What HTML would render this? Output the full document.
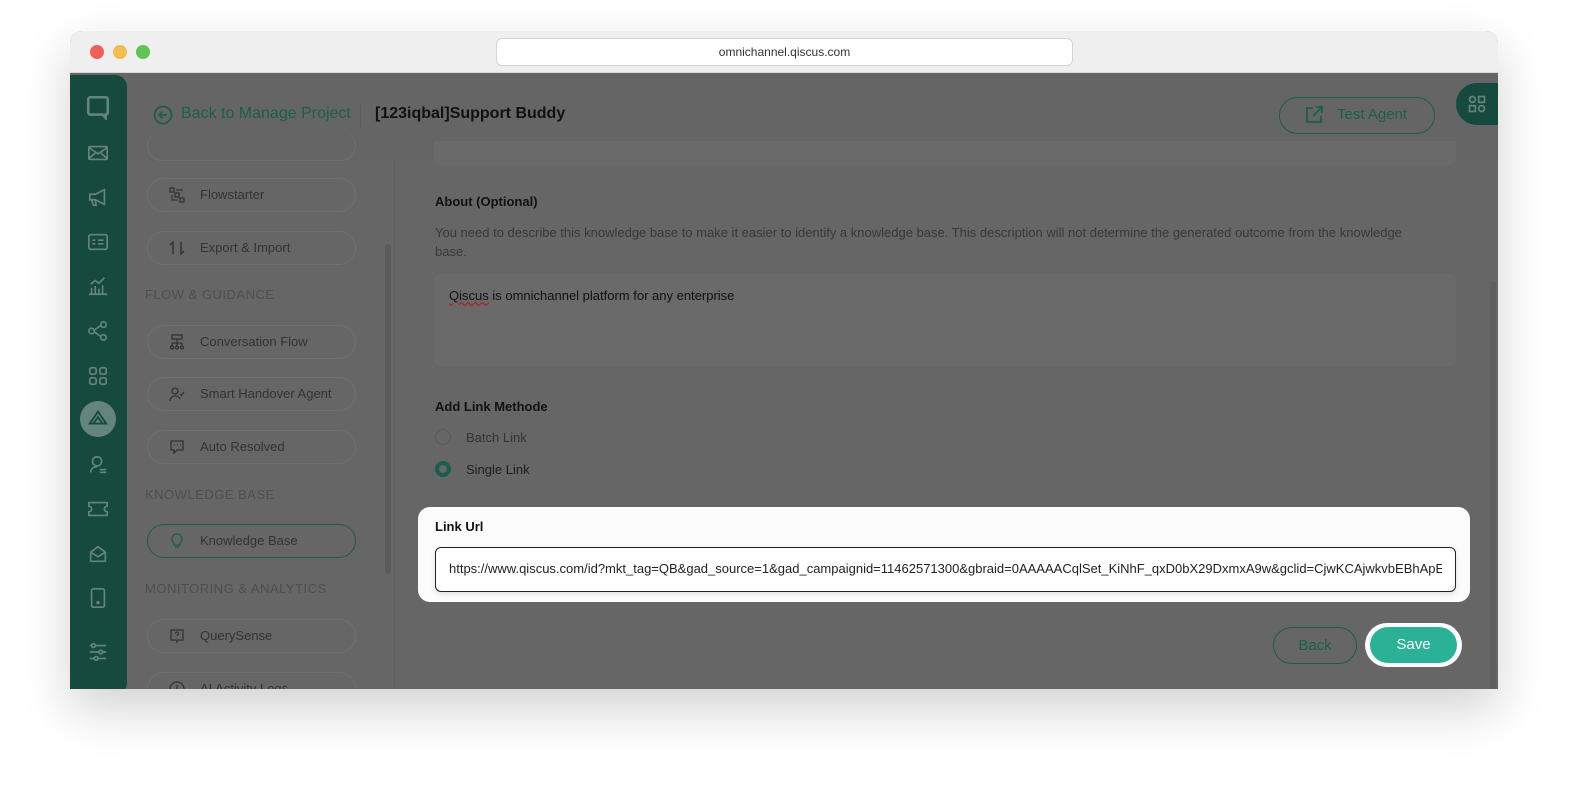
<!DOCTYPE html>
<html><head><style>
*{box-sizing:border-box;margin:0;padding:0}
body{width:1580px;height:804px;background:#fff;font-family:"Liberation Sans",sans-serif;position:relative;overflow:hidden}
.win{position:absolute;left:70px;top:31px;width:1428px;height:658px;border-radius:12px 12px 0 0;overflow:hidden;box-shadow:0 20px 50px rgba(0,0,0,.18);background:#666}
.tb{position:absolute;left:0;top:0;width:100%;height:42px;background:#efefef;border-bottom:1px solid #d8d8d8}
.dot{position:absolute;top:14px;width:14px;height:14px;border-radius:50%}
.url{position:absolute;left:426px;top:7px;width:577px;height:28px;background:#fff;border:1px solid #d6d6d6;border-radius:6px;text-align:center;font-size:12px;line-height:26px;color:#333}
.side{position:absolute;left:0;top:44px;width:57px;height:620px;background:#164a3e;border-radius:0 12px 12px 0}
.ic{position:absolute;left:17px;width:22px;height:22px}
.a{position:absolute;white-space:nowrap}
.nav{position:absolute;left:77px;width:209px;height:34px;border:1px solid #707070;border-radius:17px;color:#333;font-size:13px;line-height:32px;padding-left:52px}
.nav svg{position:absolute;left:21px;top:8px}
.sec{position:absolute;left:75px;font-size:13px;color:#4e4e4e;letter-spacing:.5px}
</style></head><body>
<div class="win">
<div class="tb">
<div class="dot" style="left:20px;background:#ee5f57"></div>
<div class="dot" style="left:43px;background:#f4bd4f"></div>
<div class="dot" style="left:66px;background:#5fc453"></div>
<div class="url">omnichannel.qiscus.com</div>
</div>
<div class="a" style="left:57px;top:43px;width:1371px;height:86px;background:#656565"></div>
<div class="side">
<svg class="ic" style="top:19px;width:26px;height:26px;left:15px" viewBox="0 0 24 24" fill="none" stroke="#65857c" stroke-width="2.4"><path d="M5 3h14a2 2 0 0 1 2 2v12a2 2 0 0 1-2 2h-0v3l-3-3H5a2 2 0 0 1-2-2V5a2 2 0 0 1 2-2z"/></svg>
<svg class="ic" style="top:67px" viewBox="0 0 24 24" fill="none" stroke="#65857c" stroke-width="1.8"><rect x="2" y="5" width="20" height="14" rx="1"/><path d="M2 6l10 7 10-7M2 18l7-6M22 18l-7-6"/></svg>
<svg class="ic" style="top:111px" viewBox="0 0 24 24" fill="none" stroke="#65857c" stroke-width="1.8"><path d="M3 9h6l10-5v16L9 15H3zM5 15l2 6h3l-1-6"/></svg>
<svg class="ic" style="top:156px" viewBox="0 0 24 24" fill="none" stroke="#65857c" stroke-width="1.8"><rect x="2" y="4" width="20" height="16" rx="2"/><path d="M6 10h3M12 10h6M6 14h3M12 14h6"/></svg>
<svg class="ic" style="top:200px" viewBox="0 0 24 24" fill="none" stroke="#65857c" stroke-width="1.8"><path d="M2 21h20M5 21v-7M9 21v-9M13 21v-6M17 21v-10M4 10l5-4 4 3 6-6"/></svg>
<svg class="ic" style="top:245px" viewBox="0 0 24 24" fill="none" stroke="#65857c" stroke-width="1.8"><circle cx="5" cy="12" r="3"/><circle cx="18" cy="5" r="3"/><circle cx="18" cy="19" r="3"/><path d="M8 11l7-5M8 13l7 5"/></svg>
<svg class="ic" style="top:290px" viewBox="0 0 24 24" fill="none" stroke="#65857c" stroke-width="1.8"><rect x="3" y="3" width="7" height="7" rx="2"/><rect x="14" y="3" width="7" height="7" rx="2"/><rect x="3" y="14" width="7" height="7" rx="2"/><rect x="14" y="14" width="7" height="7" rx="2"/></svg>
<div style="position:absolute;left:10px;top:326px;width:36px;height:36px;border-radius:50%;background:#65857c"></div>
<svg class="ic" style="top:333px" viewBox="0 0 24 24" fill="none" stroke="#164a3e" stroke-width="2"><path d="M3 17L12 4l9 13zM7 17l5-7 5 7"/></svg>
<svg class="ic" style="top:379px" viewBox="0 0 24 24" fill="none" stroke="#65857c" stroke-width="1.8"><circle cx="11" cy="8" r="5"/><path d="M4 20c0-4 3-6 7-6M14 17h7M14 20h7"/></svg>
<svg class="ic" style="top:423px" viewBox="0 0 24 24" fill="none" stroke="#65857c" stroke-width="1.8"><path d="M2 5h20v4a3 3 0 0 0 0 6v4H2v-4a3 3 0 0 0 0-6z"/></svg>
<svg class="ic" style="top:468px" viewBox="0 0 24 24" fill="none" stroke="#65857c" stroke-width="1.8"><path d="M4 10l8-6 8 6v10H4zM4 10l8 5 8-5"/></svg>
<svg class="ic" style="top:512px" viewBox="0 0 24 24" fill="none" stroke="#65857c" stroke-width="1.8"><rect x="5" y="2" width="14" height="20" rx="2"/><circle cx="12" cy="17" r="1"/></svg>
<svg class="ic" style="top:566px" viewBox="0 0 24 24" fill="none" stroke="#65857c" stroke-width="1.8"><path d="M3 5h18M3 12h18M3 19h18"/><circle cx="7" cy="5" r="2" fill="#164a3e"/><circle cx="15" cy="12" r="2" fill="#164a3e"/><circle cx="10" cy="19" r="2" fill="#164a3e"/></svg>
</div>
<svg class="a" style="left:83px;top:74px" width="20" height="20" viewBox="0 0 20 20" fill="none" stroke="#1a5e4d" stroke-width="1.8"><circle cx="10" cy="10" r="8.5"/><path d="M14 10H6M9.5 6.5L6 10l3.5 3.5"/></svg>
<div class="a" style="left:111px;top:74px;font-size:16px;color:#1a5e4d">Back to Manage Project</div>
<div class="a" style="left:290px;top:72px;width:1px;height:24px;background:#5a5a5a"></div>
<div class="a" style="left:305px;top:74px;font-size:16px;color:#111;font-weight:bold">[123iqbal]Support Buddy</div>
<div class="a" style="left:1209px;top:66px;width:156px;height:37px;border:1px solid #1a5e4d;border-radius:19px"></div>
<svg class="a" style="left:1234px;top:74px" width="20" height="20" viewBox="0 0 20 20" fill="none" stroke="#1a5e4d" stroke-width="1.8"><path d="M9 3H3v14h14v-6M12 2h6v6M18 2L9 11"/></svg>
<div class="a" style="left:1267px;top:75px;font-size:15px;color:#1a5e4d">Test Agent</div>
<div class="a" style="left:1386px;top:52px;width:60px;height:42px;background:#164a3e;border-radius:21px 0 0 21px"></div>
<svg class="a" style="left:1397px;top:63px" width="20" height="20" viewBox="0 0 24 24" fill="none" stroke="#65857c" stroke-width="2"><circle cx="6.5" cy="6.5" r="3.5"/><rect x="14" y="3" width="7" height="7"/><rect x="3" y="14" width="7" height="7"/><circle cx="17.5" cy="17.5" r="3.5"/></svg>
<div class="a" style="left:57px;top:129px;width:268px;height:529px;background:#666;border-right:1px solid #5e5e5e"></div>
<div class="a" style="left:77px;top:100px;width:209px;height:30px;border:1px solid #707070;border-radius:17px;border-top:none"></div>
<div class="a" style="left:315px;top:213px;width:6px;height:330px;background:#5b5b5b;border-radius:3px"></div>
<div class="nav" style="top:147px"><svg width="16" height="16" viewBox="0 0 16 16" fill="none" stroke="#333" stroke-width="1.3"><rect x="1" y="1" width="4" height="4"/><rect x="6" y="6" width="4" height="4"/><rect x="11" y="11" width="4" height="4"/><path d="M7 3h7M3 8v5h6"/></svg>Flowstarter</div>
<div class="nav" style="top:200px"><svg width="16" height="16" viewBox="0 0 16 16" fill="none" stroke="#333" stroke-width="1.5"><path d="M4 14V2L1 5M12 2v12l3-3"/></svg>Export &amp; Import</div>
<div class="sec" style="top:256px">FLOW &amp; GUIDANCE</div>
<div class="nav" style="top:294px"><svg width="16" height="16" viewBox="0 0 16 16" fill="none" stroke="#333" stroke-width="1.3"><rect x="3" y="1" width="10" height="4"/><path d="M8 5v4M3 9h10M3 9v3M8 9v3M13 9v3"/><circle cx="3" cy="13.5" r="1.5"/><circle cx="8" cy="13.5" r="1.5"/><circle cx="13" cy="13.5" r="1.5"/></svg>Conversation Flow</div>
<div class="nav" style="top:346px"><svg width="16" height="16" viewBox="0 0 16 16" fill="none" stroke="#333" stroke-width="1.3"><circle cx="6" cy="5" r="3"/><path d="M1 15c0-3 2-5 5-5s4 1 5 3M11 8l1.5 1.5L15 6"/></svg>Smart Handover Agent</div>
<div class="nav" style="top:399px"><svg width="16" height="16" viewBox="0 0 16 16" fill="none" stroke="#333" stroke-width="1.3"><path d="M2 2h12v9H8l-3 3v-3H2z"/><path d="M5 6h1M8 6h1M11 6h1"/></svg>Auto Resolved</div>
<div class="sec" style="top:456px">KNOWLEDGE BASE</div>
<div class="nav" style="top:493px;border-color:#1a5e4d"><svg width="16" height="16" viewBox="0 0 16 16" fill="none" stroke="#1a5e4d" stroke-width="1.3"><path d="M8 1a5 5 0 0 0-3 9v2h6v-2a5 5 0 0 0-3-9zM6 14h4"/></svg>Knowledge Base</div>
<div class="sec" style="top:550px">MONITORING &amp; ANALYTICS</div>
<div class="nav" style="top:588px"><svg width="16" height="16" viewBox="0 0 16 16" fill="none" stroke="#333" stroke-width="1.3"><path d="M2 2h12v10H9l-1 2-1-2H2z"/><path d="M6.5 5.5a1.5 1.5 0 1 1 2 1.4V8M8 9.8v.4"/></svg>QuerySense</div>
<div class="nav" style="top:641px"><svg width="16" height="16" viewBox="0 0 16 16" fill="none" stroke="#333" stroke-width="1.3"><circle cx="8" cy="8" r="7"/><path d="M8 4v4"/></svg>AI Activity Logs</div>
<div class="a" style="left:326px;top:129px;width:1102px;height:529px;background:#666"></div>
<div class="a" style="left:364px;top:110px;width:1022px;height:24px;background:#6a6a6a;border-radius:0 0 8px 8px"></div>
<div class="a" style="left:1420px;top:250px;width:6px;height:408px;background:#5f5f5f;border-radius:3px"></div>
<div class="a" style="left:365px;top:163px;font-size:13px;font-weight:bold;color:#111">About (Optional)</div>
<div class="a" style="left:365px;top:192px;width:1000px;white-space:normal;font-size:13px;line-height:19px;color:#383838">You need to describe this knowledge base to make it easier to identify a knowledge base. This description will not determine the generated outcome from the knowledge base.</div>
<div class="a" style="left:364px;top:243px;width:1022px;height:92px;background:#6a6a6a;border-radius:6px"></div>
<div class="a" style="left:379px;top:257px;font-size:13px;color:#111"><span style="text-decoration:underline wavy #a22">Qiscus</span> is omnichannel platform for any enterprise</div>
<div class="a" style="left:365px;top:368px;font-size:13px;font-weight:bold;color:#111">Add Link Methode</div>
<div class="a" style="left:365px;top:398px;width:16px;height:16px;border:1.5px solid #575757;border-radius:50%"></div>
<div class="a" style="left:396px;top:399px;font-size:13px;color:#333">Batch Link</div>
<div class="a" style="left:365px;top:430px;width:16px;height:16px;border:4.5px solid #1a5e4d;border-radius:50%;background:#666"></div>
<div class="a" style="left:396px;top:431px;font-size:13px;color:#1e1e1e">Single Link</div>
<div class="a" style="left:348px;top:476px;width:1052px;height:95px;background:#fcfcfc;border-radius:12px"></div>
<div class="a" style="left:365px;top:488px;font-size:13px;font-weight:bold;color:#111">Link Url</div>
<div class="a" style="left:365px;top:516px;width:1021px;height:45px;border:1.5px solid #222;border-radius:6px;background:#fff;overflow:hidden;font-size:13px;line-height:42px;padding-left:13px;color:#222;box-shadow:0 2px 6px rgba(0,0,0,.12)"><span style="display:inline-block;width:993px;overflow:hidden">https://www.qiscus.com/id?mkt_tag=QB&amp;gad_source=1&amp;gad_campaignid=11462571300&amp;gbraid=0AAAAACqlSet_KiNhF_qxD0bX29DxmxA9w&amp;gclid=CjwKCAjwkvbEBhApEiwA</span></div>
<div class="a" style="left:1203px;top:596px;width:84px;height:37px;border:1px solid #1a5e4d;border-radius:19px;text-align:center;line-height:35px;font-size:15px;color:#1a5e4d">Back</div>
<div class="a" style="left:1295px;top:592px;width:97px;height:44px;background:#fff;border-radius:22px"></div>
<div class="a" style="left:1300px;top:596px;width:87px;height:36px;background:#2ab196;border-radius:18px;text-align:center;line-height:36px;font-size:15px;color:#fff">Save</div>
</div>
</body></html>
